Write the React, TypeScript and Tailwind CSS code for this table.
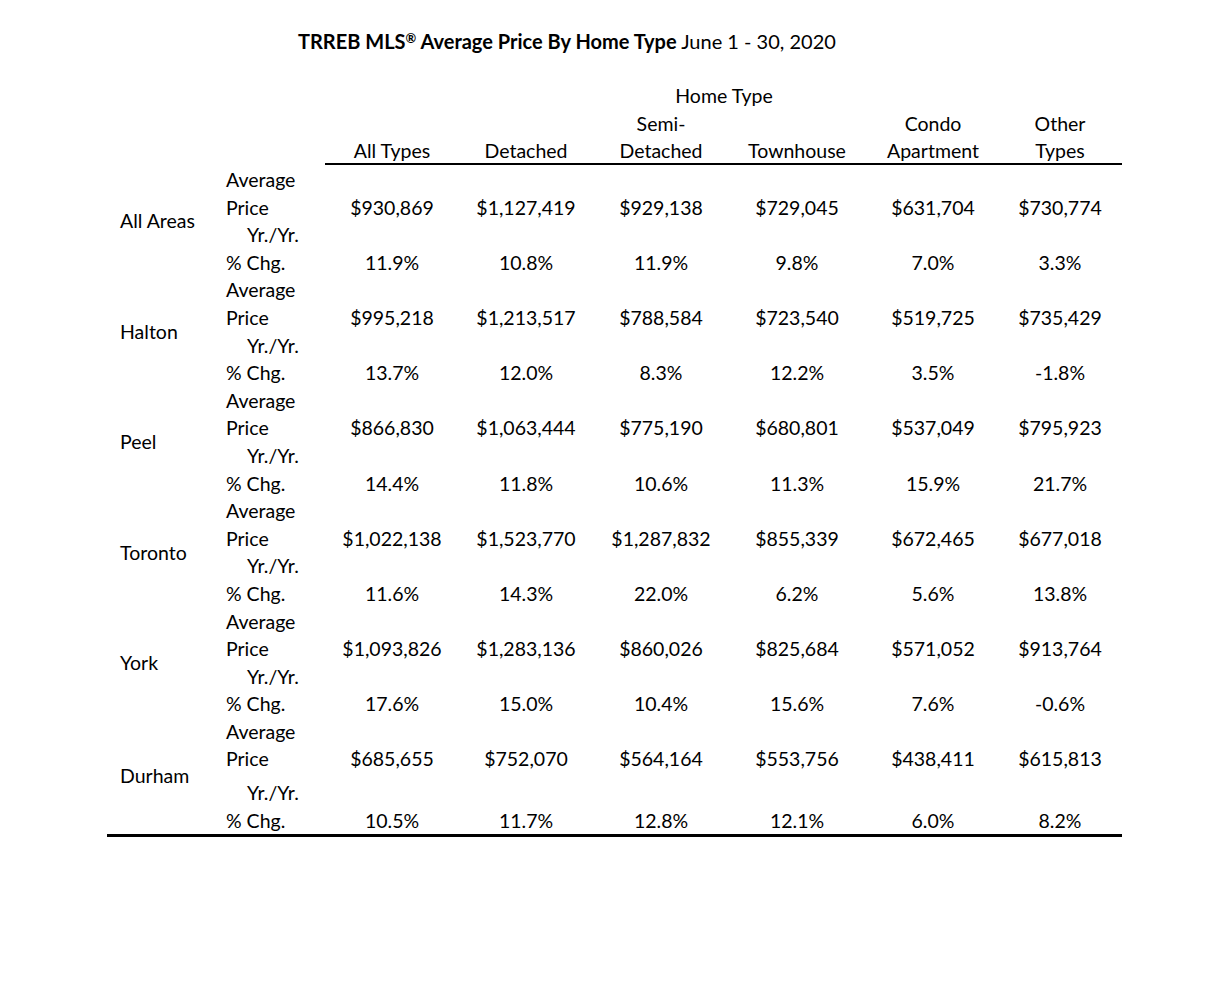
import React from "react";

type Area = { name: string; prices: string[]; chg: string[]; tall?: boolean };

const areas: Area[] = [
  { name: "All Areas", prices: ["$930,869", "$1,127,419", "$929,138", "$729,045", "$631,704", "$730,774"], chg: ["11.9%", "10.8%", "11.9%", "9.8%", "7.0%", "3.3%"] },
  { name: "Halton", prices: ["$995,218", "$1,213,517", "$788,584", "$723,540", "$519,725", "$735,429"], chg: ["13.7%", "12.0%", "8.3%", "12.2%", "3.5%", "-1.8%"] },
  { name: "Peel", prices: ["$866,830", "$1,063,444", "$775,190", "$680,801", "$537,049", "$795,923"], chg: ["14.4%", "11.8%", "10.6%", "11.3%", "15.9%", "21.7%"] },
  { name: "Toronto", prices: ["$1,022,138", "$1,523,770", "$1,287,832", "$855,339", "$672,465", "$677,018"], chg: ["11.6%", "14.3%", "22.0%", "6.2%", "5.6%", "13.8%"] },
  { name: "York", prices: ["$1,093,826", "$1,283,136", "$860,026", "$825,684", "$571,052", "$913,764"], chg: ["17.6%", "15.0%", "10.4%", "15.6%", "7.6%", "-0.6%"] },
  { name: "Durham", prices: ["$685,655", "$752,070", "$564,164", "$553,756", "$438,411", "$615,813"], chg: ["10.5%", "11.7%", "12.8%", "12.1%", "6.0%", "8.2%"], tall: true },
];

const colW = ["w-[148px]", "w-[120px]", "w-[150px]", "w-[122px]", "w-[150px]", "w-[104px]"];

function ValueRow({ vals, h }: { vals: string[]; h: string }) {
  return (
    <div className={`flex ${h} items-center`}>
      {vals.map((v, i) => (
        <div key={i} className={`${colW[i]} text-center`}>
          {v}
        </div>
      ))}
    </div>
  );
}

export default function App() {
  return (
    <div
      className="w-[1226px] h-[982px] bg-white text-black text-[19.5px] leading-[27.6px]"
      style={{ fontFamily: "Lato, 'Open Sans', sans-serif" }}
    >
      <div className="pt-[27px] pl-[298px] h-[55px] leading-[28px] whitespace-nowrap text-[20px]">
        <span className="font-bold">
          TRREB MLS<span className="text-[13px] relative top-[-6px]">®</span> Average Price By Home Type
        </span>{" "}
        June 1 - 30, 2020
      </div>

      <div className="ml-[107px] w-[1015px] mt-[26px]">
        {/* Header */}
        <div className="pl-[211px]">
          <div className="h-[29px] flex items-center justify-center pl-[8px]">Home Type</div>
          <div className="flex h-[28px] items-center">
            <div className={`${colW[0]}`} />
            <div className={`${colW[1]}`} />
            <div className={`${colW[2]} text-center`}>Semi-</div>
            <div className={`${colW[3]}`} />
            <div className={`${colW[4]} text-center`}>Condo</div>
            <div className={`${colW[5]} text-center`}>Other</div>
          </div>
          <div className="flex h-[25px] items-center">
            <div className={`${colW[0]} text-center`}>All Types</div>
            <div className={`${colW[1]} text-center`}>Detached</div>
            <div className={`${colW[2]} text-center`}>Detached</div>
            <div className={`${colW[3]} text-center`}>Townhouse</div>
            <div className={`${colW[4]} text-center`}>Apartment</div>
            <div className={`${colW[5]} text-center`}>Types</div>
          </div>
          <div className="ml-[7px] h-[2px] bg-black" />
        </div>

        {/* Body */}
        <div className="pt-[1px] border-b-[3px] border-black">
          {areas.map((a) => (
            <div key={a.name} className="flex">
              <div className="w-[113px] pl-[13px] flex items-center">{a.name}</div>
              <div className="flex flex-col">
                <div className="flex">
                  <div className="w-[98px] pl-[6px]">
                    <div className="h-[27.6px] flex items-center">Average</div>
                    <div className="h-[27.6px] flex items-center">Price</div>
                  </div>
                  <div>
                    <div className="h-[27.6px]" />
                    <ValueRow vals={a.prices} h="h-[27.6px]" />
                  </div>
                </div>
                <div className="flex">
                  <div className="w-[98px] pl-[6px]">
                    <div className={`${a.tall ? "h-[33.6px] pt-[6px]" : "h-[27.6px]"} flex items-center pl-[21px]`}>Yr./Yr.</div>
                    <div className="h-[27.6px] flex items-center">% Chg.</div>
                  </div>
                  <div>
                    <div className={a.tall ? "h-[33.6px]" : "h-[27.6px]"} />
                    <ValueRow vals={a.chg} h="h-[27.6px]" />
                  </div>
                </div>
              </div>
            </div>
          ))}
        </div>
      </div>
    </div>
  );
}
